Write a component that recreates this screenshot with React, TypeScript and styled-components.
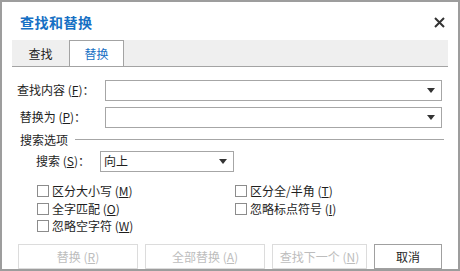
import styled, { createGlobalStyle } from 'styled-components';

const GlobalStyle = createGlobalStyle`
  html, body {
    margin: 0;
    padding: 0;
    background: #fff;
  }
  body {
    font-family: "Noto Sans CJK SC", "DejaVu Sans", sans-serif;
    font-size: 12px;
    color: #1e1e1e;
  }
`;

const Dialog = styled.div`
  box-sizing: border-box;
  width: 460px;
  height: 271px;
  border: 2px solid #9d9d9d;
  background: #fff;
  display: flex;
  flex-direction: column;
`;

const Header = styled.div`
  height: 39px;
  display: flex;
  align-items: center;
  justify-content: space-between;
  padding: 0 13px 0 18px;
`;

const Title = styled.div`
  font-size: 14px;
  font-weight: bold;
  color: #1670c4;
  letter-spacing: 0.5px;
  line-height: 16px;
  padding-top: 2px;
`;

const CloseButton = styled.div`
  width: 12px;
  height: 12px;
  display: flex;
  align-items: center;
  justify-content: center;
  margin-top: 2px;
`;

const TabStrip = styled.div`
  margin: 0 10px;
  height: 26px;
  background: #efefef;
  border-bottom: 1px solid #a3a3a3;
  display: flex;
  align-items: stretch;
`;

const Tab = styled.div<{ active?: boolean }>`
  box-sizing: border-box;
  width: ${p => (p.active ? 55 : 57)}px;
  display: flex;
  align-items: center;
  justify-content: center;
  font-size: 12px;
  line-height: 14px;
  color: ${p => (p.active ? '#1670c4' : '#222')};
  background: ${p => (p.active ? '#fff' : 'transparent')};
  border: ${p => (p.active ? '1px solid #a3a3a3' : 'none')};
  border-bottom: none;
  padding-top: ${p => (p.active ? 1 : 2)}px;
`;

const Form = styled.div`
  padding: 13px 16px 0 15px;
  display: flex;
  flex-direction: column;
`;

const FieldRow = styled.div<{ gap?: number }>`
  display: flex;
  align-items: center;
  margin-top: ${p => p.gap || 0}px;
`;

const Label = styled.div<{ width: number }>`
  width: ${p => p.width}px;
  flex: none;
  font-size: 12px;
  line-height: 14px;
  white-space: nowrap;
`;

const Key = styled.span`
  text-decoration: underline;
`;

const ComboBox = styled.div<{ width?: number }>`
  box-sizing: border-box;
  height: 21px;
  width: ${p => (p.width ? p.width + 'px' : 'auto')};
  flex: ${p => (p.width ? 'none' : '1')};
  border: 1px solid #a6a6a6;
  display: flex;
  align-items: center;
  justify-content: space-between;
  padding: 0 6px 0 3px;
  font-size: 12px;
  line-height: 14px;
`;

const Arrow = styled.span`
  width: 0;
  height: 0;
  border-left: 4px solid transparent;
  border-right: 4px solid transparent;
  border-top: 5px solid #333;
`;

const SectionRow = styled.div`
  display: flex;
  align-items: center;
  margin-top: 4px;
  height: 16px;
  padding-left: 3px;
  gap: 7px;
`;

const SectionLine = styled.div`
  flex: 1;
  height: 1px;
  background: #a6a6a6;
  margin-right: -2px;
`;

const SearchRow = styled.div`
  display: flex;
  align-items: center;
  margin-top: 3px;
  padding-left: 19px;
`;

const OptionsGrid = styled.div`
  display: grid;
  grid-template-columns: 198px 1fr;
  grid-auto-rows: 17.5px;
  margin-top: 11px;
  padding-left: 20px;
`;

const CheckItem = styled.label`
  display: flex;
  align-items: center;
  gap: 3px;
  font-size: 12px;
  line-height: 14px;
  white-space: nowrap;
`;

const CheckBox = styled.span`
  box-sizing: border-box;
  width: 12px;
  height: 12px;
  border: 1px solid #8c8c8c;
  background: #fff;
`;

const ButtonRow = styled.div`
  display: flex;
  gap: 7px;
  padding-left: 16px;
  margin-top: 9px;
`;

const Button = styled.div<{ width: number; enabled?: boolean }>`
  box-sizing: border-box;
  width: ${p => p.width}px;
  height: 25px;
  border: 1px solid ${p => (p.enabled ? '#a0a0a0' : '#dcdcdc')};
  color: ${p => (p.enabled ? '#1e1e1e' : '#bdbdbd')};
  display: flex;
  align-items: center;
  justify-content: center;
  font-size: 12px;
  line-height: 14px;
  background: #fff;
`;

const leftOptions = [
  { text: '区分大小写', key: 'M' },
  { text: '区分全/半角', key: 'T' },
  { text: '全字匹配', key: 'O' },
  { text: '忽略标点符号', key: 'I' },
  { text: '忽略空字符', key: 'W' }
];

const buttons = [
  { text: '替换', key: 'R', width: 120 },
  { text: '全部替换', key: 'A', width: 120 },
  { text: '查找下一个', key: 'N', width: 95 },
  { text: '取消', width: 68, enabled: true }
];

export default function App() {
  return (
    <>
      <GlobalStyle />
      <Dialog>
        <Header>
          <Title>查找和替换</Title>
          <CloseButton>
            <svg width="11" height="11" viewBox="0 0 11 11">
              <path d="M1 1 L10 10 M10 1 L1 10" stroke="#333" strokeWidth="2" />
            </svg>
          </CloseButton>
        </Header>
        <TabStrip>
          <Tab>查找</Tab>
          <Tab active>替换</Tab>
        </TabStrip>
        <Form>
          <FieldRow>
            <Label width={88}>
              查找内容 (<Key>F</Key>)：
            </Label>
            <ComboBox>
              <span />
              <Arrow />
            </ComboBox>
          </FieldRow>
          <FieldRow gap={6}>
            <Label width={88}>
              &nbsp;替换为 (<Key>P</Key>)：
            </Label>
            <ComboBox>
              <span />
              <Arrow />
            </ComboBox>
          </FieldRow>
          <SectionRow>
            <span>搜索选项</span>
            <SectionLine />
          </SectionRow>
          <SearchRow>
            <Label width={64}>
              搜索 (<Key>S</Key>)：
            </Label>
            <ComboBox width={134}>
              <span>向上</span>
              <Arrow />
            </ComboBox>
          </SearchRow>
          <OptionsGrid>
            {leftOptions.map(opt => (
              <CheckItem key={opt.key}>
                <CheckBox />
                <span>
                  {opt.text} (<Key>{opt.key}</Key>)
                </span>
              </CheckItem>
            ))}
          </OptionsGrid>
        </Form>
        <ButtonRow>
          {buttons.map(btn => (
            <Button key={btn.text} width={btn.width} enabled={btn.enabled}>
              {btn.text}
              {btn.key && (
                <>
                  &nbsp;(<Key>{btn.key}</Key>)
                </>
              )}
            </Button>
          ))}
        </ButtonRow>
      </Dialog>
    </>
  );
}
